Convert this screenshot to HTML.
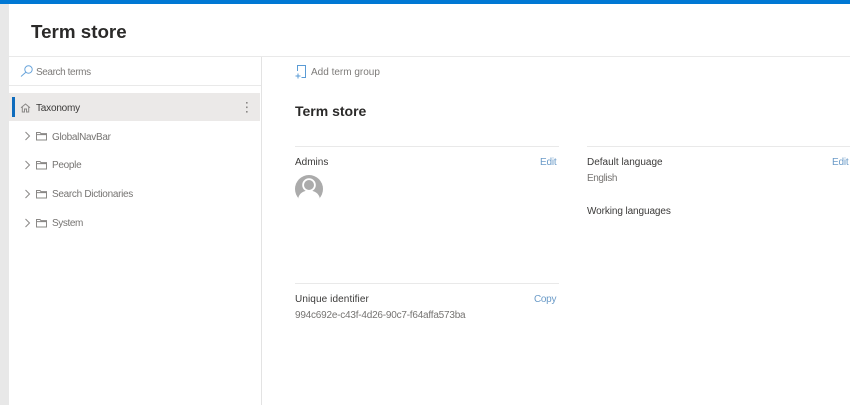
<!DOCTYPE html>
<html><head><meta charset="utf-8"><style>
html,body{margin:0;padding:0;background:#fff}
#p{position:relative;width:850px;height:405px;overflow:hidden;background:#fff;font-family:"Liberation Sans",sans-serif;font-size:10px;color:#3b3a39}
#p div,#p svg{position:absolute}
.t{white-space:nowrap;line-height:14px;height:14px}
.g{color:#767472}
.b{color:#6b9bc8}
.h{background:#e9e9e9}
</style></head><body><div id="p">
<div style="left:0;top:0;width:850px;height:4px;background:#0078d4"></div>
<div style="left:0;top:4px;width:9px;height:401px;background:#e8e8e8"></div>
<div class="t" style="left:31px;top:22px;height:20px;line-height:20px;font-size:18.8px;font-weight:bold;color:#2b2a29">Term store</div>
<div class="h" style="left:9px;top:56px;width:841px;height:1px"></div>
<div class="h" style="left:261px;top:57px;width:1px;height:348px;background:#e3e3e3"></div>
<div class="h" style="left:9px;top:85px;width:252px;height:1px"></div>
<svg style="left:20px;top:65px" width="13" height="13" viewBox="0 0 13 13" fill="none" stroke="#6aa5db" stroke-width="1"><circle cx="8.5" cy="4.5" r="3.7"/><path d="M5.8 7.2L1 11.5"/></svg>
<div class="t g" style="left:36px;top:66px;letter-spacing:-.4px;color:#7d7b79">Search terms</div>
<div style="left:9px;top:93px;width:251px;height:28px;background:#ebe9e8"></div>
<div style="left:12px;top:97px;width:3px;height:20px;background:#0f6cbd"></div>
<svg style="left:20px;top:103px" width="11" height="10" viewBox="0 0 11 10" fill="none" stroke="#8a8886" stroke-width="1"><path d="M1 4.8L5.5 1L10 4.8M2.3 4V9H4.5V6H6.5V9H8.7V4"/></svg>
<div class="t" style="left:36px;top:102px;letter-spacing:-.2px">Taxonomy</div>
<svg style="left:245px;top:101px" width="4" height="13" viewBox="0 0 4 13" fill="#8a8886"><rect x="1" y="1" width="1.6" height="1.6"/><rect x="1" y="5.5" width="1.6" height="1.6"/><rect x="1" y="10" width="1.6" height="1.6"/></svg>

<svg style="left:24px;top:131px" width="7" height="11" viewBox="0 0 7 11" fill="none" stroke="#8a8886" stroke-width="1"><path d="M1.5 1L5.5 5L1.5 9"/></svg>
<svg style="left:36px;top:131px" width="11" height="10" viewBox="0 0 11 10" fill="none" stroke="#8a8886" stroke-width="1"><path d="M.5 9V1.5H4L5 2.6H10.5V9ZM.5 3.6H10.5"/></svg>
<div class="t g" style="left:52px;top:131px;letter-spacing:-.3px">GlobalNavBar</div>

<svg style="left:24px;top:160px" width="7" height="11" viewBox="0 0 7 11" fill="none" stroke="#8a8886" stroke-width="1"><path d="M1.5 1L5.5 5L1.5 9"/></svg>
<svg style="left:36px;top:160px" width="11" height="10" viewBox="0 0 11 10" fill="none" stroke="#8a8886" stroke-width="1"><path d="M.5 9V1.5H4L5 2.6H10.5V9ZM.5 3.6H10.5"/></svg>
<div class="t g" style="left:52px;top:159px;letter-spacing:-.3px">People</div>

<svg style="left:24px;top:189px" width="7" height="11" viewBox="0 0 7 11" fill="none" stroke="#8a8886" stroke-width="1"><path d="M1.5 1L5.5 5L1.5 9"/></svg>
<svg style="left:36px;top:189px" width="11" height="10" viewBox="0 0 11 10" fill="none" stroke="#8a8886" stroke-width="1"><path d="M.5 9V1.5H4L5 2.6H10.5V9ZM.5 3.6H10.5"/></svg>
<div class="t g" style="left:52px;top:188px;letter-spacing:-.3px">Search Dictionaries</div>

<svg style="left:24px;top:218px" width="7" height="11" viewBox="0 0 7 11" fill="none" stroke="#8a8886" stroke-width="1"><path d="M1.5 1L5.5 5L1.5 9"/></svg>
<svg style="left:36px;top:218px" width="11" height="10" viewBox="0 0 11 10" fill="none" stroke="#8a8886" stroke-width="1"><path d="M.5 9V1.5H4L5 2.6H10.5V9ZM.5 3.6H10.5"/></svg>
<div class="t g" style="left:52px;top:217px;letter-spacing:-.4px">System</div>

<svg style="left:295px;top:65px" width="12" height="14" viewBox="0 0 12 14" fill="none" stroke="#5a9bd5" stroke-width="1"><path d="M2.5 6V.5H10.5V12.5H6.5M.5 11H5.5M3 8.5V13.5"/></svg>
<div class="t g" style="left:311px;top:66px;color:#7d7b79">Add term group</div>
<div class="t" style="left:295px;top:103px;height:16px;line-height:16px;font-size:14px;font-weight:bold;color:#2b2a29">Term store</div>

<div class="h" style="left:295px;top:146px;width:264px;height:1px"></div>
<div class="t" style="left:295px;top:156px">Admins</div>
<div class="t b" style="left:540px;top:156px;letter-spacing:-.2px">Edit</div>
<svg style="left:295px;top:175px" width="28" height="24" viewBox="0 0 28 24"><defs><clipPath id="c"><circle cx="14" cy="14" r="14"/></clipPath></defs><g clip-path="url(#c)"><rect width="28" height="28" fill="#ababab"/><path d="M3 24C4 18 9 15.5 14 15.5S24 18 25 24Z" fill="#fff"/><circle cx="14" cy="10" r="6.8" fill="#fff"/><circle cx="14" cy="10" r="5" fill="#ababab"/></g></svg>

<div class="h" style="left:587px;top:146px;width:263px;height:1px"></div>
<div class="t" style="left:587px;top:156px">Default language</div>
<div class="t b" style="left:832px;top:156px;letter-spacing:-.2px">Edit</div>
<div class="t g" style="left:587px;top:172px;letter-spacing:-.4px">English</div>
<div class="t" style="left:587px;top:205px;letter-spacing:-.1px">Working languages</div>

<div class="h" style="left:295px;top:283px;width:264px;height:1px"></div>
<div class="t" style="left:295px;top:293px;letter-spacing:.1px">Unique identifier</div>
<div class="t b" style="left:534px;top:293px;letter-spacing:-.3px">Copy</div>
<div class="t g" style="left:295px;top:309px;letter-spacing:-.22px">994c692e-c43f-4d26-90c7-f64affa573ba</div>
</div></body></html>
